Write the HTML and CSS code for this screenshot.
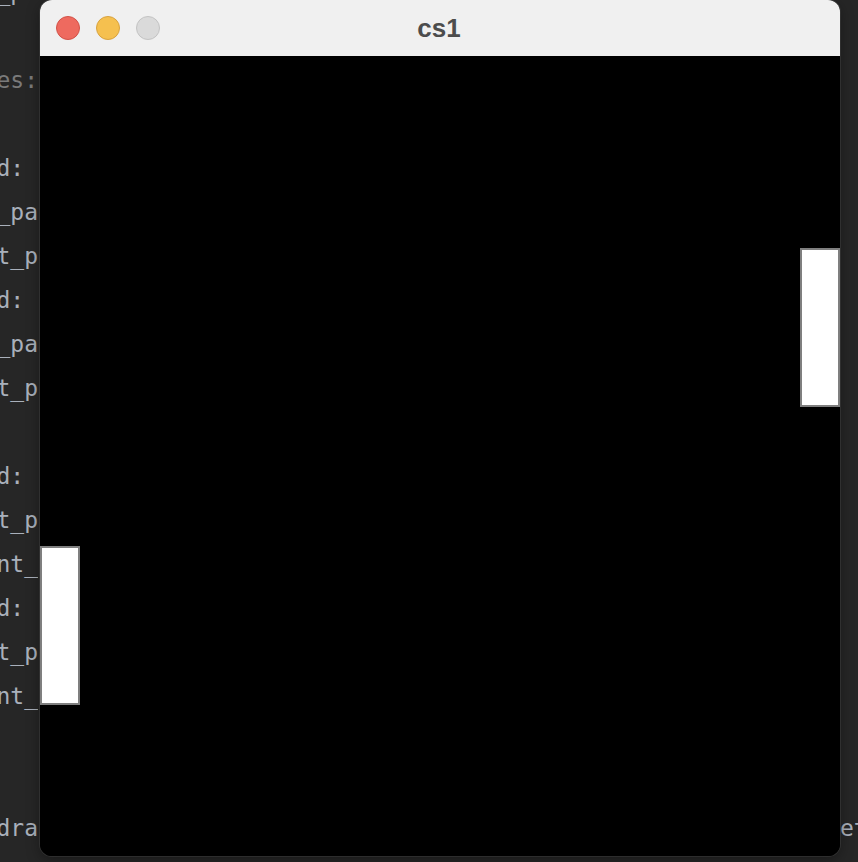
FILE: index.html
```html
<!DOCTYPE html>
<html>
<head>
<meta charset="utf-8">
<title>cs1</title>
<link rel="stylesheet" href="styles.css">
</head>
<body>
<div class="desktop">
  <div class="editor">
    <div class="line"><span class="l">left_pa</span></div>
    <div class="line"><span class="l"></span></div>
    <div class="line"><span class="l dim">types:</span></div>
    <div class="line"><span class="l"></span></div>
    <div class="line"><span class="l">bound:&nbsp;</span></div>
    <div class="line"><span class="l">left_pa</span></div>
    <div class="line"><span class="l">right_p</span></div>
    <div class="line"><span class="l">bound:&nbsp;</span></div>
    <div class="line"><span class="l">left_pa</span></div>
    <div class="line"><span class="l">right_p</span></div>
    <div class="line"><span class="l"></span></div>
    <div class="line"><span class="l">bound:&nbsp;</span></div>
    <div class="line"><span class="l">right_p</span></div>
    <div class="line"><span class="l">paint_</span></div>
    <div class="line"><span class="l">bound:&nbsp;</span></div>
    <div class="line"><span class="l">right_p</span></div>
    <div class="line"><span class="l">paint_</span></div>
    <div class="line"><span class="l"></span></div>
    <div class="line"><span class="l"></span></div>
    <div class="line"><span class="l">pygame.dra</span><span class="r">et</span></div>
  </div>

  <div class="window">
    <div class="titlebar">
      <div class="lights">
        <span class="light red"></span>
        <span class="light yellow"></span>
        <span class="light gray"></span>
      </div>
      <div class="title">cs1</div>
    </div>
    <div class="canvas">
      <div class="paddle left-paddle"></div>
      <div class="paddle right-paddle"></div>
    </div>
  </div>
</div>
</body>
</html>
```

FILE: styles.css
```css
html, body {
  margin: 0;
  padding: 0;
  background: #262626;
  overflow: hidden;
}

.desktop {
  position: relative;
  width: 858px;
  height: 862px;
  overflow: hidden;
  background: #262626;
}

.editor {
  margin-top: -30px;
  font-family: "DejaVu Sans Mono", "Liberation Mono", monospace;
  font-size: 23px;
  line-height: 44px;
  color: #a9b0bb;
}

.line {
  display: flex;
  height: 44px;
  white-space: nowrap;
}

.l {
  width: 38px;
  display: flex;
  justify-content: flex-end;
  overflow: hidden;
  flex: none;
  white-space: pre;
}

.dim {
  color: #7a7a7a;
}

.r {
  margin-left: 802px;
}

.window {
  position: absolute;
  left: 40px;
  top: 0;
  width: 800px;
  height: 856px;
  border-radius: 12px;
  overflow: hidden;
  background: #000;
  box-shadow: 0 0 0 1px rgba(255, 255, 255, 0.08), 0 4px 14px rgba(0, 0, 0, 0.35);
  display: flex;
  flex-direction: column;
}

.titlebar {
  position: relative;
  height: 56px;
  flex: none;
  background: #f0f0f0;
  display: flex;
  align-items: center;
  justify-content: center;
}

.lights {
  position: absolute;
  left: 16px;
  top: 16px;
  display: flex;
  gap: 16px;
}

.light {
  width: 22px;
  height: 22px;
  border-radius: 50%;
  border: 1px solid;
}

.red {
  background: #ee6a5f;
  border-color: #d25248;
}

.yellow {
  background: #f5c04f;
  border-color: #d8a23f;
}

.gray {
  background: #dadada;
  border-color: #c3c3c3;
}

.title {
  font-family: "Liberation Sans", Arial, sans-serif;
  font-weight: bold;
  font-size: 26px;
  color: #4c4c4c;
  margin-left: -2px;
}

.canvas {
  position: relative;
  flex: 1;
  background: #000;
}

.paddle {
  position: absolute;
  width: 40px;
  height: 159px;
  box-sizing: border-box;
  background: #fff;
  border: 2px solid #7f7f7f;
}

.left-paddle {
  left: 0;
  top: 490px;
}

.right-paddle {
  left: 760px;
  top: 192px;
}
```
